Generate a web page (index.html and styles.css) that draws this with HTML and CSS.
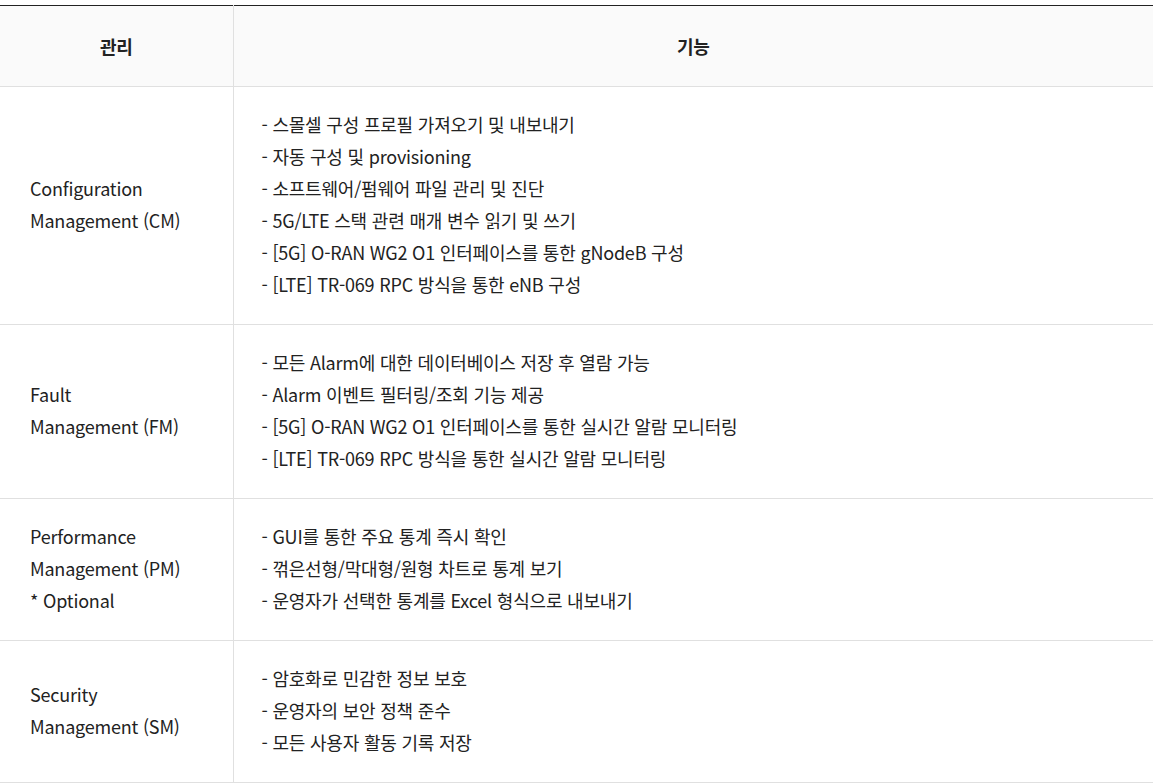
FILE: index.html
```html
<!DOCTYPE html>
<html lang="ko">
<head>
<meta charset="utf-8">
<link rel="stylesheet" href="styles.css">
</head>
<body>
<table class="spec">
  <thead>
    <tr><th class="col-mgmt">관리</th><th>기능</th></tr>
  </thead>
  <tbody>
    <tr>
      <td class="col-mgmt">Configuration<br>Management (CM)</td>
      <td>- 스몰셀 구성 프로필 가져오기 및 내보내기<br>- 자동 구성 및 provisioning<br>- 소프트웨어/펌웨어 파일 관리 및 진단<br>- 5G/LTE 스택 관련 매개 변수 읽기 및 쓰기<br>- [5G] O-RAN WG2 O1 인터페이스를 통한 gNodeB 구성<br>- [LTE] TR-069 RPC 방식을 통한 eNB 구성</td>
    </tr>
    <tr>
      <td class="col-mgmt">Fault<br>Management (FM)</td>
      <td>- 모든 Alarm에 대한 데이터베이스 저장 후 열람 가능<br>- Alarm 이벤트 필터링/조회 기능 제공<br>- [5G] O-RAN WG2 O1 인터페이스를 통한 실시간 알람 모니터링<br>- [LTE] TR-069 RPC 방식을 통한 실시간 알람 모니터링</td>
    </tr>
    <tr>
      <td class="col-mgmt">Performance<br>Management (PM)<br>* Optional</td>
      <td>- GUI를 통한 주요 통계 즉시 확인<br>- 꺾은선형/막대형/원형 차트로 통계 보기<br>- 운영자가 선택한 통계를 Excel 형식으로 내보내기</td>
    </tr>
    <tr>
      <td class="col-mgmt">Security<br>Management (SM)</td>
      <td>- 암호화로 민감한 정보 보호<br>- 운영자의 보안 정책 준수<br>- 모든 사용자 활동 기록 저장</td>
    </tr>
  </tbody>
</table>
</body>
</html>
```

FILE: styles.css
```css
html, body {
  margin: 0;
  padding: 0;
  background: #fff;
}
body {
  padding-top: 5px;
  font-family: "Noto Sans CJK KR", "Noto Sans", sans-serif;
  color: #222;
}
.spec {
  width: 1153px;
  border-collapse: collapse;
  border-top: 1px solid #222;
  font-size: 18px;
  letter-spacing: -0.2px;
  line-height: 32px;
}
.spec th {
  background: #fafafa;
  height: 80px;
  padding: 0;
  font-weight: 700;
  text-align: center;
  border-bottom: 1px solid #e0e0e0;
}
.spec td {
  padding: 21px 28px 24px;
  text-align: left;
  vertical-align: middle;
  border-bottom: 1px solid #e0e0e0;
}
.spec td.col-mgmt {
  padding-left: 30px;
}
.spec .col-mgmt {
  width: 233px;
  box-sizing: border-box;
  border-right: 1px solid #e0e0e0;
}
```
